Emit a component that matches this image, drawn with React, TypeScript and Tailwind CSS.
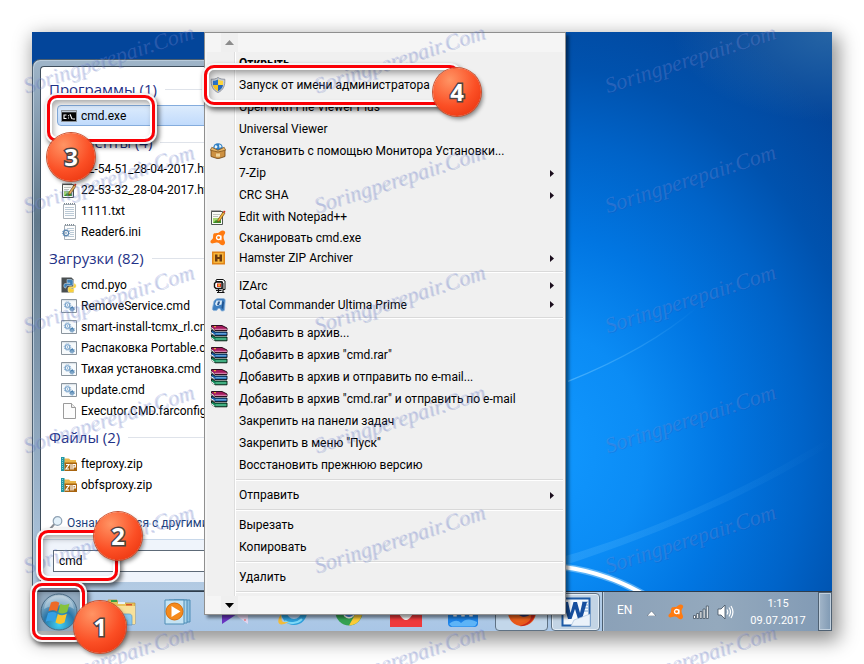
import React from "react";

type IconProps = { className?: string };

function ShieldIcon({ className = "size-4" }: IconProps) {
  return (
    <svg viewBox="0 0 16 16" className={className} aria-hidden="true">
      <path d="M8 .5C6 2 3.500 2.300 1.200 2.200c-.4 6.500 1.500 11 6.800 13.300 5.300-2.300 7.200-6.800 6.800-13.300C12.500 2.300 10 2 8 .5z" fill="#c9ced6" stroke="#7d8490" strokeWidth=".8" />
      <path d="M8 2.500C6.500 3.400 4.800 3.700 3 3.700V8h5z" fill="#2b74c9" />
      <path d="M8 2.500c1.500.9 3.200 1.200 5 1.200V8H8z" fill="#fcd53d" />
      <path d="M3 8c.4 2.800 2 4.800 5 6.200V8z" fill="#f7c41f" />
      <path d="M13 8c-.4 2.800-2 4.800-5 6.200V8z" fill="#2467b8" />
    </svg>
  );
}

function BoxIcon({ className = "size-4" }: IconProps) {
  return (
    <svg viewBox="0 0 16 16" className={className} aria-hidden="true">
      <circle cx="8" cy="5" r="4.800" fill="#2f7fc4" />
      <path d="M5 2.500c1.500-1 2.500.5 2.500 1.500S5 6 4.500 5zM9 1.500c1.500 0 2.500 1 2.500 2.500L9.500 5z" fill="#e6f4fc" />
      <path d="M1 6.500 8 8.500l7-2v7L8 15.800l-7-2.300z" fill="#cd9142" stroke="#6b4312" strokeWidth=".8" />
      <path d="M8 9 .4 7.200 1.800 4.300l6.200 3 6.200-3 1.400 2.900z" fill="#e7b66a" stroke="#7a4d16" strokeWidth=".7" />
      <path d="M6 10.500h4v3.200H6z" fill="#f0d59c" />
    </svg>
  );
}

function NotepadIcon({ className = "size-4" }: IconProps) {
  return (
    <svg viewBox="0 0 16 16" className={className} aria-hidden="true">
      <path d="M1.500 2.500h11v13h-11z" fill="#fafbf6" stroke="#4f5553" />
      <path d="M2 1v2M4 1v2M6 1v2M8 1v2M10 1v2" stroke="#555" strokeWidth=".9" />
      <path d="M3 5.500h7M3 7.500h5" stroke="#b0b6b0" strokeWidth=".8" />
      <path d="M3 9h8v5H3z" fill="#a6d873" />
      <path d="m3 14 3-3 2 1 3-1v3z" fill="#3f8f26" />
      <path d="m8 10.500 5-7.500 1.800 1.300-5 7.500-2.300 1z" fill="#f3b43a" stroke="#6b4210" strokeWidth=".7" />
      <path d="m13 3 1-1.500L15.500 2.500l-.8 1.500z" fill="#d33022" />
    </svg>
  );
}

function AvastIcon({ className = "size-4" }: IconProps) {
  return (
    <svg viewBox="0 0 16 16" className={className} aria-hidden="true">
      <path d="M4.200 3.300C6 2.800 7.500 3.200 9 2.400 10.300 1.700 10.800.4 12.800.5c2.300.2 2.900 2 1.900 3.600-1.300 1.900-1.400 3.100-.8 5.100.5 1.700 1.500 2.400 1 4.300-.6 2-2.900 2.400-4.400 1-1.300-1.200-2-2.200-4-2-2.200.2-4.500 1.900-5.700.2-1.100-1.700.6-2.800 1.800-4C3.700 7.600 2.400 4 4.200 3.300z" fill="#ff7a10" />
      <circle cx="8.600" cy="7.600" r="2.100" fill="none" stroke="#fff" strokeWidth="1.300" />
      <path d="M10.900 5.400v4.800" stroke="#fff" strokeWidth="1.200" />
    </svg>
  );
}

function HamsterIcon({ className = "size-4" }: IconProps) {
  return (
    <svg viewBox="0 0 16 16" className={className} aria-hidden="true">
      <path d="M2 1.500h13v13H2z" fill="#e08318" />
      <path d="M3.500 3h10v10h-10z" fill="#f6b53b" />
      <path d="M5 4.500h2.500V7h2V4.500H12v7H9.500V9h-2v2.500H5z" fill="#6b3a10" />
    </svg>
  );
}

function ViseIcon({ className = "size-4" }: IconProps) {
  return (
    <svg viewBox="0 0 16 16" className={className} aria-hidden="true">
      <path d="M7 1.500h6l2 1.500v8.500h-2V5l-1.500-1.500H6V2z" fill="#fff" stroke="#111" />
      <path d="M6 4h6v6.500H6L4.500 9V5.500z" fill="#fff" stroke="#111" strokeWidth="1.400" />
      <path d="M7 5.500h4V9H7z" fill="#e0341c" />
      <path d="M8.300 6.200h1.500v2H8.300z" fill="#f8de3c" />
      <path d="M6 12.500h5.500M8.500 11v3M7 14.500h7.500M13 12v2" stroke="#111" strokeWidth="1.200" />
    </svg>
  );
}

function CommanderIcon({ className = "size-4" }: IconProps) {
  return (
    <svg viewBox="0 0 16 16" className={className} aria-hidden="true">
      <path d="M4 4c1.500-2 3-2.500 5-2.500h4c1.500 0 2.300.8 2.200 2.200L14.500 13c-.1 1-2.800 1.500-3.500.5L10 11.500H8L7.200 13c-1 1-4.800.8-4.900-.8z" fill="#3f7fc0" stroke="#8db4da" strokeWidth=".8" />
      <path d="M6.500 3.500H12l-.5 4-5 1.500L5 7z" fill="#dcecf8" />
      <path d="M8 4.500h2.200L9 8H7z" fill="#2a5790" />
      <path d="m12.500 4 1.500 1-1 7-1.500-1z" fill="#21548f" />
    </svg>
  );
}

function BooksIcon({ className = "size-[18px]" }: IconProps) {
  return (
    <svg viewBox="0 0 18 18" className={className} aria-hidden="true">
      <path d="M1.500 1.500H12L17 4v2.500H5L1.500 4z" fill="#a5195e" stroke="#1c0511" strokeWidth=".9" />
      <path d="M5 5.300h12" stroke="#f0b8d4" strokeWidth=".8" />
      <path d="M1.500 6 5 8h12v3.500H5L1.500 9z" fill="#1661ac" stroke="#081426" strokeWidth=".9" />
      <path d="M5.500 9.800h11" stroke="#9ed2f7" strokeWidth=".8" />
      <path d="M1.500 11 5 13h12v3.800H5l-3.500-2.600z" fill="#12895a" stroke="#04180f" strokeWidth=".9" />
      <path d="M5.500 15h11" stroke="#8fe8bf" strokeWidth=".8" />
      <path d="M.8 3.500 4.500 6M.8 8.500l3.700 2.300M.8 13.500l3.700 2.500" stroke="#fff" strokeWidth="1" />
      <path d="M.8 4.500 4.500 7M.8 9.800l3.700 2.200" stroke="#111" strokeWidth=".7" />
      <path d="M4 2.700h2" stroke="#f0c832" />
    </svg>
  );
}

function ConsoleIcon({ className = "size-4" }: IconProps) {
  return (
    <svg viewBox="0 0 16 16" className={className} aria-hidden="true">
      <path d="M.5 2.500h15v11H.5z" fill="#050505" stroke="#8c9298" />
      <path d="M1 3h14v1.300H1z" fill="#c2cbd6" />
      <path d="M5.500 7H3v3.500h2.500M7.500 7.200v1.100M7.500 9.500v1.100M9 6.300l2 4.700M11.500 11H14" stroke="#fff" strokeWidth="1.100" fill="none" />
    </svg>
  );
}

function TextFileIcon({ className = "size-4" }: IconProps) {
  return (
    <svg viewBox="0 0 16 16" className={className} aria-hidden="true">
      <path d="M2.500 1.500h12v14h-12z" fill="#fdfdfd" stroke="#a8b0b7" />
      <path d="M3 .8h11" stroke="#7f8b95" strokeDasharray="1 1" strokeWidth="1.400" />
      <path d="M4 4.500h9M4 6.500h9M4 8.500h9M4 10.500h9M4 12.500h9" stroke="#a9bccb" strokeWidth=".8" />
    </svg>
  );
}

function Gear({ x, y, r, color }: { x: number; y: number; r: number; color: string }) {
  return (
    <g fill="none" stroke={color}>
      <circle cx={x} cy={y} r={r} strokeWidth="1.100" />
      <circle cx={x} cy={y} r={r + 1} strokeWidth=".9" strokeDasharray="1 1" />
      <circle cx={x} cy={y} r=".4" />
    </g>
  );
}

function IniIcon({ className = "size-4" }: IconProps) {
  return (
    <svg viewBox="0 0 16 16" className={className} aria-hidden="true">
      <path d="M3.500 1.500h11v14h-11z" fill="#fdfdfd" stroke="#a8b0b7" />
      <path d="M4 .8h10" stroke="#7f8b95" strokeDasharray="1 1" strokeWidth="1.400" />
      <path d="M6 4.500h7M8 6.500h5M9 8.500h4M9 10.500h4M7 12.500h6" stroke="#a9bccb" strokeWidth=".8" />
      <Gear x={5} y={9} r={2.600} color="#5a86b0" />
    </svg>
  );
}

function ScriptIcon({ className = "size-4" }: IconProps) {
  return (
    <svg viewBox="0 0 16 16" className={className} aria-hidden="true">
      <path d="M.5 1.500h15v13H.5z" fill="#f7fafc" stroke="#8b959e" />
      <path d="M1 2h14v1.200H1z" fill="#dde4ea" />
      <Gear x={6.500} y={7} r={2.300} color="#78a3cb" />
      <Gear x={11} y={10.800} r={1.400} color="#4a80b0" />
    </svg>
  );
}

function PythonIcon({ className = "size-4" }: IconProps) {
  return (
    <svg viewBox="0 0 16 16" className={className} aria-hidden="true">
      <path d="M.5.5h10l2 2v13H.5z" fill="#4a4f50" />
      <path d="M6 2.500h4c1.500 0 2 .8 2 2V7c0 1.200-.8 1.500-2 1.500H7C5.500 8.500 5 9.500 5 11H4C2.500 11 2.300 6.500 4 6.500h5V6H6z" fill="#3d80b8" stroke="#dbe8f2" strokeWidth=".5" />
      <path d="M13 6.500c2.500-.5 2.800 4.500.8 4.500H10v.8h3V14c0 2-6 2-6 0v-2c0-1.500.7-2.200 2-2.200h2.500c1 0 1.500-.8 1.500-2z" fill="#f8cf3a" stroke="#f7eec2" strokeWidth=".5" />
    </svg>
  );
}

function PageIcon({ className = "size-4" }: IconProps) {
  return (
    <svg viewBox="0 0 16 16" className={className} aria-hidden="true">
      <path d="M2.500.5h8l4 4v11h-12z" fill="#fcfcfc" stroke="#9b9b9b" />
      <path d="M10.500.5v4h4" fill="#ededed" stroke="#9b9b9b" />
    </svg>
  );
}

function ZipIcon({ className = "size-4" }: IconProps) {
  return (
    <svg viewBox="0 0 16 16" className={className} aria-hidden="true">
      <path d="M3 2.500h5l1.500 1.500H15V8H3z" fill="#e9b54a" />
      <path d="M0 1h3.500v14H0z" fill="#2298a6" />
      <path d="M1.500 2v12" stroke="#7fd0d8" strokeDasharray="1 1" />
      <path d="M3.500 6.500H16V15H3.500z" fill="#a8640f" />
      <path d="M5 8.500h3L5 13h3M10 8v5.500M12 13.500V8.500h2.300v2.500H12" fill="none" stroke="#fff" strokeWidth="1.200" />
    </svg>
  );
}

function MagnifierIcon() {
  return (
    <svg viewBox="0 0 14 14" className="size-[14px]" aria-hidden="true">
      <path d="M1 13 5 8.500" stroke="#8a8f96" strokeWidth="2" strokeLinecap="round" />
      <circle cx="8.500" cy="5" r="4.300" fill="#e3f1fa" stroke="#8fa2b4" strokeWidth="1.200" />
    </svg>
  );
}

function OrbIcon() {
  return (
    <svg viewBox="0 0 38 38" className="size-[38px]" aria-hidden="true">
      <defs>
        <radialGradient id="orb" cx=".5" cy=".85" r=".85">
          <stop offset="0" stopColor="#3fd0f4" />
          <stop offset=".5" stopColor="#2a76a8" />
          <stop offset="1" stopColor="#b9cbd8" />
        </radialGradient>
      </defs>
      <circle cx="19" cy="19" r="18" fill="url(#orb)" stroke="#486b86" />
      <path d="M4 16C5 7 12 2.500 19 2.500S33 7 34 16c-9-5-20-5-30 0z" fill="#fff" opacity=".3" />
      <path d="M11 9.500c3-1.600 6-1.300 8.300.3L17 18.500c-2.700-1.700-5.500-1.700-8.500-.2z" fill="#ee6a28" />
      <path d="M20.500 10.800c3 1.700 6 1.500 9-.3L27.200 19c-3 1.800-6 1.800-9 .2z" fill="#86c23c" />
      <path d="M8 20c3-1.500 6-1.400 8.600.2L14.200 29c-2.700-1.700-5.500-1.600-8.500-.2z" fill="#35a0e6" />
      <path d="M17.800 21c3 1.700 6 1.500 9-.2L24.500 29.500c-3 1.900-6 1.800-9 .1z" fill="#fcc32c" />
    </svg>
  );
}

function ExplorerIcon() {
  return (
    <svg viewBox="0 0 30 28" className="h-7 w-[30px]" aria-hidden="true">
      <path d="M2 2h9l1 3h17v21H2z" fill="#e9c35b" stroke="#b98f30" strokeWidth=".7" />
      <path d="M5 2h6v2H5z" fill="#39a047" />
      <path d="M12 4h7v2h-7z" fill="#e8f1f6" />
      <path d="M20 6h6v1.500h-6z" fill="#d8532c" />
      <path d="M2 8h27v18H2z" fill="#f8e19a" />
      <path d="M4 19c0-2 1-3 3-3h16c2 0 3 1 3 3v8h-5v-5H9v5H4z" fill="#8ac8ee" stroke="#5c9ac8" strokeWidth=".7" />
    </svg>
  );
}

function PlayerIcon() {
  return (
    <svg viewBox="0 0 27 26" className="h-[26px] w-[27px]" aria-hidden="true">
      <path d="M10 1h16v22H10z" fill="#8dbfe0" stroke="#4f8db6" />
      <path d="M5 1h18v23H5z" fill="#a9d4ec" stroke="#4f8db6" />
      <path d="M1 1h19v24H1z" fill="#c5e3f3" stroke="#4f8db6" />
      <circle cx="10.500" cy="12.500" r="8.500" fill="#f58a1c" stroke="#d86c08" />
      <path d="M7.500 7v11l9-5.500z" fill="#fff" />
    </svg>
  );
}

function MediaIcon() {
  return (
    <svg viewBox="0 0 28 28" className="size-7" aria-hidden="true">
      <path d="M1 1v25l18-12z" fill="#6a35c2" />
      <path d="M27 4v22l-11-8z" fill="#e2d6f0" />
      <path d="m23 22 1 1 1-1-1-1z" fill="#ee5a5a" />
    </svg>
  );
}

function BrowserIcon() {
  return (
    <svg viewBox="0 0 30 30" className="size-[30px]" aria-hidden="true">
      <circle cx="17" cy="15" r="10" fill="none" stroke="#2e9fdb" strokeWidth="6" />
      <path d="M9 16h16" stroke="#7ad2f5" strokeWidth="4" />
      <path d="M8 24c4 3 12 3 17-2" stroke="#7fd8f6" strokeWidth="2" fill="none" />
      <path d="M4 17c-4 6-4 12 3 10 2-.6 4-1.600 5-2.500-3 1-6 1-7-.5-.8-1.500-.5-4-1-7z" fill="#f2bb3a" />
    </svg>
  );
}

function ChromeIcon() {
  return (
    <svg viewBox="0 0 28 28" className="size-7" aria-hidden="true">
      <circle cx="14" cy="14" r="13.500" fill="#34a152" />
      <path d="M14 .5A13.500 13.500 0 0 1 26 8H14L9 12 2.500 7A13.500 13.500 0 0 1 14 .5z" fill="#e24435" />
      <path d="M26 8A13.500 13.500 0 0 1 14 27.500l5.500-10L18 8z" fill="#fbcb38" />
      <circle cx="14" cy="14" r="6.500" fill="#fff" />
      <circle cx="14" cy="14" r="5" fill="#3f80de" />
    </svg>
  );
}

function RedIcon() {
  return (
    <svg viewBox="0 0 32 30" className="h-[30px] w-8" aria-hidden="true">
      <path d="M0 0h32v30H0z" fill="#ee3a3c" />
      <path d="M8 8h6l2 4 2-4h6c1 8-4 15-8 15S7 16 8 8z" fill="#fff" />
    </svg>
  );
}

function MaxthonIcon() {
  return (
    <svg viewBox="0 0 30 30" className="size-[30px]" aria-hidden="true">
      <rect width="30" height="30" rx="4" fill="#1c83e8" />
      <path d="M7 19.500V9h16v10.500M15 9v10.500" stroke="#fff" strokeWidth="3.500" fill="none" />
      <path d="M1 27c5-4 9-4 12-1 5-5 10-4 16-1v1c-1 2.500-2 3.500-4 3.500H4z" fill="#5db4f7" />
    </svg>
  );
}

function FirefoxIcon() {
  return (
    <svg viewBox="0 0 30 30" className="size-[30px]" aria-hidden="true">
      <circle cx="15" cy="15" r="14" fill="#e8581a" />
      <path d="M1 13C2 4 12-1 19 2c8 3 11 10 9 16-2 7-9 12-16 11 9-2 13-6 12-12z" fill="#c5261b" />
      <circle cx="16" cy="14" r="8" fill="#24316d" />
      <path d="M3 10c5-1 8 1 12 3l-3 5c4 3 8 2 12-1-2 7-9 10-14 8s-8-8-7-15z" fill="#e8601c" />
    </svg>
  );
}

function WordIcon() {
  return (
    <svg viewBox="0 0 30 30" className="size-[30px]" aria-hidden="true">
      <path d="M1.500 1.500h27v27h-27z" fill="#f5f9fd" stroke="#1d5aa6" strokeWidth="2" />
      <path d="M21 5h6M22 8h5M23 11h4M23 14h4" stroke="#7da8d6" />
      <path d="M2 5h5l2.500 11L12.500 5h3.500l3 11 2.500-11H26l-5 17h-4l-3-10-3.500 10H7z" fill="#164f9f" />
      <path d="m13 23 16-6v12H10z" fill="#eaf2fa" stroke="#9db9d7" strokeWidth=".6" />
    </svg>
  );
}

function SignalIcon() {
  return (
    <svg viewBox="0 0 16 14" className="h-[14px] w-4" aria-hidden="true">
      <g fill="#fff" stroke="#43515f" strokeWidth=".8">
        <path d="M.5 10.500h2v3h-2zM3.700 8.500h2v5h-2zM6.900 6.500h2v7h-2zM10.100 4h2v9.500h-2zM13.300 1h2v12.500h-2z" />
      </g>
    </svg>
  );
}

function VolumeIcon() {
  return (
    <svg viewBox="0 0 17 16" className="h-4 w-[17px]" aria-hidden="true">
      <path d="M1 5h3l4-4v14l-4-4H1z" fill="#fff" stroke="#43515f" strokeWidth=".8" />
      <path d="M10 5.500c1 1.500 1 3.500 0 5M12 3.500c2 3 2 6 0 9M14 2c2.600 4 2.600 8 0 12" fill="none" stroke="#fff" strokeWidth="1.200" />
    </svg>
  );
}

type FileEntry = { name: string; Icon: (p: IconProps) => React.ReactElement };

const groups: { title: string; files: FileEntry[] }[] = [
  { title: "Программы (1)", files: [{ name: "cmd.exe", Icon: ConsoleIcon }] },
  {
    title: "Документы (4)",
    files: [
      { name: "22-54-51_28-04-2017.html", Icon: NotepadIcon },
      { name: "22-53-32_28-04-2017.html", Icon: NotepadIcon },
      { name: "1111.txt", Icon: TextFileIcon },
      { name: "Reader6.ini", Icon: IniIcon },
    ],
  },
  {
    title: "Загрузки (82)",
    files: [
      { name: "cmd.pyo", Icon: PythonIcon },
      { name: "RemoveService.cmd", Icon: ScriptIcon },
      { name: "smart-install-tcmx_rl.cmd", Icon: ScriptIcon },
      { name: "Распаковка Portable.cmd", Icon: ScriptIcon },
      { name: "Тихая установка.cmd", Icon: ScriptIcon },
      { name: "update.cmd", Icon: ScriptIcon },
      { name: "Executor.CMD.farconfig", Icon: PageIcon },
    ],
  },
  {
    title: "Файлы (2)",
    files: [
      { name: "fteproxy.zip", Icon: ZipIcon },
      { name: "obfsproxy.zip", Icon: ZipIcon },
    ],
  },
];

type MenuEntry = {
  label: string;
  Icon?: (p: IconProps) => React.ReactElement;
  sub?: boolean;
  bold?: boolean;
  height?: string;
};

const sections: MenuEntry[][] = [
  [
    { label: "Открыть", bold: true },
    { label: "Запуск от имени администратора", Icon: ShieldIcon },
    { label: "Open with File Viewer Plus" },
    { label: "Universal Viewer" },
    { label: "Установить с помощью Монитора Установки...", Icon: BoxIcon },
    { label: "7-Zip", sub: true },
    { label: "CRC SHA", sub: true },
    { label: "Edit with Notepad++", Icon: NotepadIcon },
    { label: "Сканировать cmd.exe", Icon: AvastIcon, height: "h-5" },
    { label: "Hamster ZIP Archiver", Icon: HamsterIcon, sub: true, height: "h-5" },
  ],
  [
    { label: "IZArc", Icon: ViseIcon, sub: true, height: "h-[19px]" },
    { label: "Total Commander Ultima Prime", Icon: CommanderIcon, sub: true, height: "h-[19px]" },
  ],
  [
    { label: "Добавить в архив...", Icon: BooksIcon },
    { label: 'Добавить в архив "cmd.rar"', Icon: BooksIcon },
    { label: "Добавить в архив и отправить по e-mail...", Icon: BooksIcon },
    { label: 'Добавить в архив "cmd.rar" и отправить по e-mail', Icon: BooksIcon },
    { label: "Закрепить на панели задач" },
    { label: 'Закрепить в меню "Пуск"' },
    { label: "Восстановить прежнюю версию" },
  ],
  [{ label: "Отправить", sub: true }],
  [{ label: "Вырезать" }, { label: "Копировать" }],
  [{ label: "Удалить" }],
];

function StartMenu() {
  return (
    <section className="mt-[27px] flex w-[410px] flex-col rounded-tl-lg border border-[#4c5f70] bg-linear-to-b from-[#9fb5c9] via-[#60788b] via-30% to-[#b3cbe4] px-[7px] pt-[6px] pb-2 shadow-[inset_1px_1px_0_#b9cbdb]">
      <div className="rounded-tl border-t border-l border-[#3f4e5c] bg-white pt-[6px]">
        {groups.map((group) => (
          <div key={group.title}>
            <div className="flex h-8 items-center gap-2 pl-2">
              <h2 className="font-['Open_Sans',sans-serif] text-[15px] whitespace-nowrap text-[#1f3287]">{group.title}</h2>
              <span className="h-px flex-1 bg-[#dfe3ea]" />
            </div>
            {group.files.map(({ name, Icon }) => (
              <button
                key={name}
                type="button"
                className={
                  name === "cmd.exe"
                    ? "ml-4 flex h-[21px] w-[370px] items-center gap-1 rounded-sm border border-[#84acdd] bg-linear-to-b from-[#dcebfc] to-[#c1dbfc] pl-[3px] text-left whitespace-nowrap"
                    : "ml-4 flex h-[21px] w-[370px] items-center gap-1 pl-1 text-left whitespace-nowrap"
                }
              >
                <Icon className="size-4 shrink-0" />
                <span>{name}</span>
              </button>
            ))}
          </div>
        ))}
        <a href="#more" className="flex h-11 items-center gap-1 pt-3 pl-2 whitespace-nowrap text-[#1c3f7c]">
          <MagnifierIcon />
          Ознакомиться с другими результатами
        </a>
      </div>
      <div className="border-t border-l border-[#3f4e5c] border-t-[#c8d8ea] bg-[#eff4fb] py-[10px] pl-3">
        <input
          aria-label="Найти программы и файлы"
          defaultValue="cmd"
          className="block h-[22px] w-[340px] border border-[#5d6a78] bg-white px-[5px] outline-none"
        />
      </div>
    </section>
  );
}

function ContextMenu() {
  return (
    <div
      role="menu"
      className="absolute top-0 left-[172px] w-[362px] border border-[#8f8f8f] bg-[#f5f5f5] shadow-[3px_3px_3px_rgba(0,0,0,0.45)]"
    >
      <div className="flex h-[19px] justify-start pl-4">
        <span className="flex w-[17px] items-center justify-center bg-[#efefef]">
          <svg viewBox="0 0 9 5" className="h-[5px] w-[9px]" aria-hidden="true"><path d="M0 5h9L4.500 0z" fill="#8b8b8b" /></svg>
        </span>
      </div>
      <div className="mx-0.5 bg-[linear-gradient(to_right,#f0f0f0_27px,#dedede_27px,#dedede_28px,#ffffff_28px,#ffffff_29px,#f0f0f0_29px)]">
        {sections.map((items, i) => (
          <div key={i}>
            {items.map(({ label, Icon, sub, bold, height = "h-[22px]" }) => (
              <button
                key={label}
                type="button"
                role="menuitem"
                className={`flex w-full items-center text-left whitespace-nowrap ${height}`}
              >
                <span className="flex w-8 shrink-0 items-center pl-[3px]">{Icon && <Icon />}</span>
                <span className={bold ? "font-bold" : ""}>{label}</span>
                {sub && (
                  <svg viewBox="0 0 4 7" className="mr-[9px] ml-auto h-[7px] w-1" aria-hidden="true"><path d="M0 0v7l4-3.500z" fill="#1a0d1c" /></svg>
                )}
              </button>
            ))}
            <div className="flex h-2 items-center pl-[29px]">
              <div className="h-0.5 w-full border-t border-[#d9d9d9] bg-white" />
            </div>
          </div>
        ))}
      </div>
      <div className="flex h-[18px] pl-4">
        <span className="flex w-[17px] items-center justify-center bg-[#efefef]">
          <svg viewBox="0 0 9 5" className="h-[5px] w-[9px]" aria-hidden="true"><path d="M0 0h9L4.500 5z" fill="#000" /></svg>
        </span>
      </div>
    </div>
  );
}

const taskButton = "flex h-10 w-[57px] items-center justify-center";

function Taskbar() {
  return (
    <footer className="flex h-10 items-stretch overflow-hidden border-t border-[#2d3c4c] bg-linear-to-b from-[#b4cde6] to-[#a9c6e6]">
      <button type="button" aria-label="Пуск" className="flex w-[54px] items-center justify-center bg-[#91a9bf]"><OrbIcon /></button>
      <nav className="flex flex-1 items-center pl-[6px]">
        <button type="button" aria-label="Проводник" className={taskButton}><ExplorerIcon /></button>
        <button type="button" aria-label="Проигрыватель" className={taskButton}><PlayerIcon /></button>
        <button type="button" aria-label="Медиа" className={taskButton}><MediaIcon /></button>
        <button type="button" aria-label="Internet Explorer" className={taskButton}><BrowserIcon /></button>
        <button type="button" aria-label="Chrome" className={taskButton}><ChromeIcon /></button>
        <button type="button" aria-label="Vivaldi" className={taskButton}><RedIcon /></button>
        <button type="button" aria-label="Maxthon" className={taskButton}><MaxthonIcon /></button>
        <button type="button" aria-label="Firefox" className="ml-1 flex h-[38px] w-[53px] items-center justify-center rounded-sm border border-[#5f7284] bg-[#c3d7ea]"><FirefoxIcon /></button>
        <button type="button" aria-label="Word" className="ml-[3px] flex h-[38px] w-[49px] items-center justify-center rounded-sm border border-[#5f7284] bg-[#c3d4e4] shadow-[inset_0_0_0_1px_#e4edf5]"><WordIcon /></button>
      </nav>
      <div className="flex items-center border-l border-[#4d5f71] bg-linear-to-r from-[#8ba1b8] via-[#94a9bd] to-[#8099b4] text-white shadow-[inset_1px_0_0_#c3d2e0]">
        <span className="ml-[14px] w-[30px] pb-1">EN</span>
        <svg viewBox="0 0 9 5" className="mt-1 h-[5px] w-[9px]" aria-hidden="true"><path d="M0 5h9L4.500 0z" fill="#fff" stroke="#4a5968" strokeWidth=".5" /></svg>
        <span className="ml-3 flex"><AvastIcon className="size-4" /></span>
        <span className="ml-[9px] flex"><SignalIcon /></span>
        <span className="ml-2 flex"><VolumeIcon /></span>
        <time className="mr-3 ml-4 w-[56px] text-center text-[11px] leading-[17px] whitespace-nowrap">
          1:15
          <br />
          09.07.2017
        </time>
        <button type="button" aria-label="Показать рабочий стол" className="h-full w-[14px] border border-[#4f6173] bg-linear-to-r from-[#a3b6c9] to-[#7f99b3] shadow-[inset_0_0_0_1px_#c1d0de]" />
      </div>
    </footer>
  );
}

function Wallpaper() {
  return (
    <svg viewBox="0 0 800 560" preserveAspectRatio="none" className="absolute inset-0 size-full" aria-hidden="true">
      <defs>
        <linearGradient id="beam" x1="0" x2="1">
          <stop offset="0" stopColor="#6cc4ff" stopOpacity=".6" />
          <stop offset="1" stopColor="#6cc4ff" stopOpacity="0" />
        </linearGradient>
        <radialGradient id="corner" cx="1" cy="0" r="1">
          <stop offset="0" stopColor="#7fb4c0" stopOpacity=".28" />
          <stop offset="1" stopColor="#7fb4c0" stopOpacity="0" />
        </radialGradient>
      </defs>
      <path d="M640 0h160v90H640z" fill="url(#corner)" />
      <path d="M530 526C620 500 720 456 800 405v8c-70 44-160 86-270 122z" fill="url(#beam)" opacity=".4" />
      <path d="M536 350c50-20 95-45 130-75" fill="none" stroke="url(#beam)" strokeWidth="1.200" />
      <path d="M520 535c30 2 62 10 98 32" fill="none" stroke="#bfe6ff" strokeWidth="7" opacity=".45" />
      <path d="M520 535c30 2 62 10 98 32" fill="none" stroke="#fff" strokeWidth="4" />
    </svg>
  );
}

function Watermarks() {
  return (
    <div aria-hidden="true" className="pointer-events-none absolute inset-0 overflow-hidden">
      <div className="ml-[28px] grid grid-cols-[repeat(3,291px)] auto-rows-[120px]">
        {Array.from({ length: 18 }, (_, i) => (
          <div key={i} className="pt-[72px]">
            <span className="block w-max origin-bottom-left -rotate-[18deg] font-['Liberation_Serif',serif] text-[22px] leading-7 text-[#7d92dc]/30 italic [text-shadow:1px_1px_0_rgba(40,60,150,0.18)]">
              Soringperepair.Com
            </span>
          </div>
        ))}
      </div>
    </div>
  );
}

const frame =
  "absolute rounded-[10px] border-3 border-[#fb0005] shadow-[0_0_0_2px_#f4f4f4,inset_0_0_0_2px_#fff,2px_3px_5px_2px_rgba(0,0,0,0.6),inset_2px_4px_6px_1px_rgba(0,0,0,0.35)]";
const badge =
  "absolute flex items-center justify-center rounded-full bg-[radial-gradient(circle_at_35%_25%,#ff9464,#fb4f25_55%,#e52c08)] font-['Open_Sans',sans-serif] text-2xl font-bold text-white shadow-[0_0_0_1px_#c8502f,2px_3px_4px_rgba(0,0,0,0.45)] [paint-order:stroke_fill] [-webkit-text-stroke:3px_#4c4444]";

function Annotations() {
  return (
    <div className="pointer-events-none absolute inset-0">
      <div className={`${frame} top-[63px] left-[15px] h-[47px] w-[108px]`} />
      <div className={`${frame} top-[33px] left-[172px] h-10 w-[256px]`} />
      <div className={`${frame} top-[498px] left-[6px] h-[51px] w-[80px]`} />
      <div className={`${frame} top-[551px] left-0 h-[57px] w-[53px]`} />
      <span className={`${badge} top-[101px] left-[15px] size-12`}>3</span>
      <span className={`${badge} top-[36px] left-[401px] size-12`}>4</span>
      <span className={`${badge} top-[480px] left-[62px] size-12`}>2</span>
      <span className={`${badge} top-[569px] left-[42px] size-[52px]`}>1</span>
    </div>
  );
}

export default function App() {
  return (
    <main className="relative min-h-screen overflow-hidden bg-white p-8 font-[Roboto,'Open_Sans',sans-serif] text-[12px] leading-4 text-black">
      <div className="relative shadow-[4px_7px_18px_3px_rgba(0,0,0,0.42)]">
        <div className="relative overflow-hidden bg-[radial-gradient(ellipse_400px_480px_at_64%_75%,#1198ff_0%,#0b8cf5_25%,#0176e2_45%,#0063c8_65%,#0052ae_80%,#03459a_100%)]">
          <Wallpaper />
          <div className="relative">
            <StartMenu />
          </div>
        </div>
        <Taskbar />
        <ContextMenu />
      </div>
      <Watermarks />
      <div className="pointer-events-none absolute inset-8">
        <Annotations />
      </div>
    </main>
  );
}
